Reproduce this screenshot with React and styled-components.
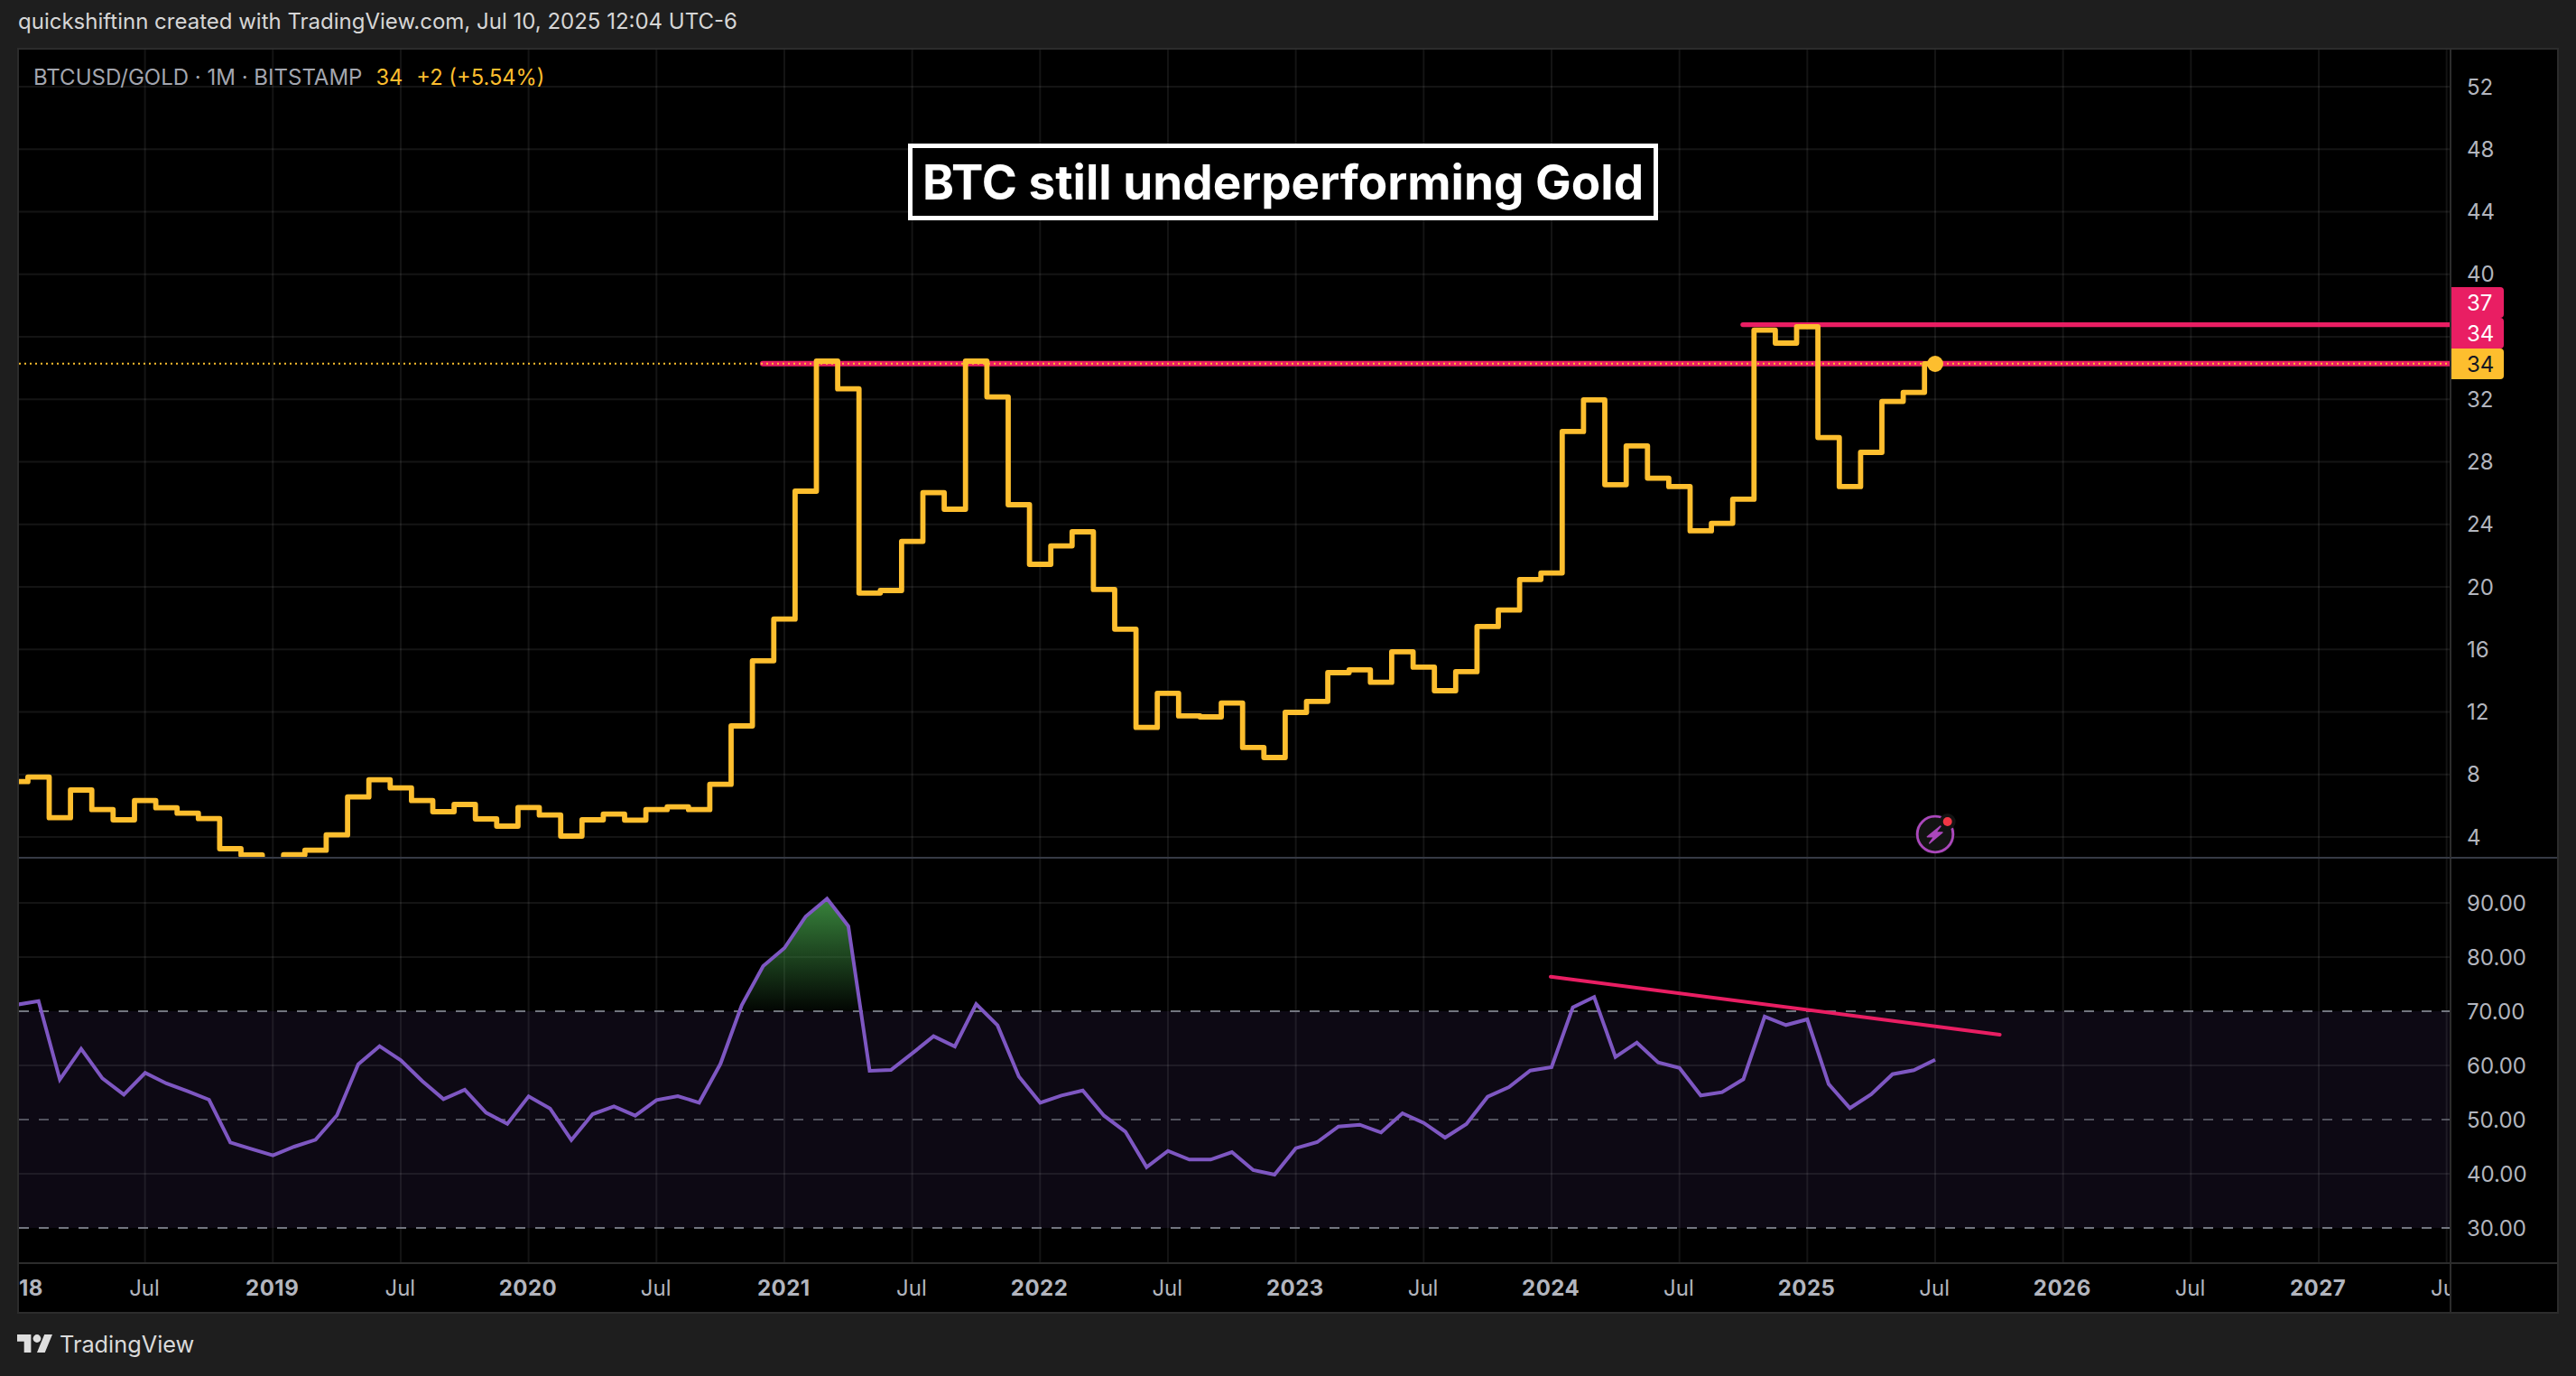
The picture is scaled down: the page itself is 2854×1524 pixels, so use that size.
import React from 'react'
import styled, { createGlobalStyle } from 'styled-components'

const GlobalStyle = createGlobalStyle`
  html, body {
    margin: 0;
    padding: 0;
    background: #1e1e1e;
  }
  * {
    box-sizing: border-box;
  }
`

const Page = styled.div`
  width: 2854px;
  height: 1524px;
  display: flex;
  flex-direction: column;
  overflow: hidden;
  background: #1e1e1e;
  font-family: Inter, "Liberation Sans", sans-serif;
`

const Header = styled.div`
  height: 53px;
  padding: 0 0 6px 20px;
  display: flex;
  align-items: center;
  color: #d6d6d6;
  font-size: 24px;
  white-space: nowrap;
`

const Frame = styled.div`
  margin: 0 19px 0 19px;
  height: 1402px;
  border: 2px solid #2c2c2c;
  background: #000;
  display: grid;
  grid-template-columns: 2693px 119px;
  grid-template-rows: 896px 449px 53px;
`

const Pane = styled.div`
  position: relative;
  overflow: hidden;
  border-bottom: 2px solid ${p => p.$line};
`

const PaneSvg = styled.svg`
  display: block;
`

const Legend = styled.div`
  position: absolute;
  top: 18px;
  left: 16px;
  display: flex;
  gap: 15px;
  font-size: 24px;
  line-height: 26px;
  white-space: nowrap;
  color: #a3a6af;
`

const LegendValue = styled.span`
  color: #fdbe2e;
  font-size: 23.7px;
`

const Title = styled.div`
  position: absolute;
  top: 104px;
  left: 985px;
  height: 85px;
  padding: 0 11px;
  display: flex;
  align-items: center;
  border: 5px solid #fff;
  background: #000;
  color: #fff;
  font-size: 53px;
  font-weight: 700;
  white-space: nowrap;
`

const PriceAxis = styled.div`
  position: relative;
  overflow: hidden;
  display: flex;
  flex-direction: column;
  padding-top: ${p => p.$top}px;
  border-left: 2px solid #2c2c2c;
  border-bottom: 2px solid ${p => p.$line};
`

const PriceLabel = styled.div`
  flex: 0 0 ${p => p.$step}px;
  display: flex;
  align-items: center;
  padding-left: 17px;
  color: #b2b5be;
  font-size: 24px;
`

const TagStack = styled.div`
  position: absolute;
  top: 263px;
  left: 0;
  display: flex;
  flex-direction: column;
`

const Tag = styled.div`
  width: 58px;
  height: 34px;
  padding-left: 17px;
  display: flex;
  align-items: center;
  border-radius: 0 4px 4px 0;
  background: ${p => p.$bg};
  color: ${p => p.$fg};
  font-size: 24px;
`

const TimeAxis = styled.div`
  overflow: hidden;
  display: flex;
  align-items: center;
`

const TimeRow = styled.div`
  margin-left: -73.5px;
  display: flex;
`

const TimeLabel = styled.div`
  flex: 0 0 141.67px;
  text-align: center;
  color: #b2b5be;
  font-size: 24px;
  font-weight: ${p => (p.$year ? 700 : 400)};
  letter-spacing: ${p => (p.$year ? '0.5px' : '0')};
`

const AxisCorner = styled.div`
  border-left: 2px solid #2c2c2c;
`

const Footer = styled.div`
  flex: 1;
  padding: 0 0 3px 19px;
  display: flex;
  align-items: center;
  gap: 8px;
  color: #dadada;
  font-size: 25.3px;
`

// x of the last bar (Jul 2025), one bar is 23.61px, half a year is 141.67px
const LAST_X = 2144
const BAR = 23.61
const HALF_YEAR = 141.67

const gridX = Array.from({ length: 19 }, (_, i) => LAST_X - HALF_YEAR * (14 - i))
const mainGridY = Array.from({ length: 13 }, (_, i) => 96 + 69.25 * i)
const rsiGridY = [1000, 1060, 1180, 1300]

const priceLevels = [
  865.7, 860.7, 905.7, 875, 896.7, 908, 886.7, 894.7, 900.7, 906.7, 940, 947, 962, 946.7, 941.7, 924.7,
  882.7, 863.7, 872.7, 886.7, 899, 891, 907, 915, 894.3, 902.7, 926, 908, 901.7, 908.3, 896.7, 893.7, 896.7, 868.7,
  804, 731.8, 685.7, 544, 400, 430.7, 656.8, 654, 599.6, 545.7, 564, 400, 439.6, 559, 625, 604.6, 589, 652.9,
  696.8, 805.7, 767.9, 792.9, 794, 778.6, 827.9, 839, 789, 776.8, 745, 741.8, 755.7, 721.8, 738.9, 765,
  743.9, 693.9, 675.7, 641.8, 634.6, 477.9, 442.9, 536.8, 493.9, 529.6, 538.9, 587.9, 579.6, 552.9,
  365.7, 380, 361.8, 484.6, 538.9, 501, 444.6, 434.6, 402.9,
]

// RSI values as y on the page, oldest first, last one sits on LAST_X
const rsiLevels = [
  1112.7, 1108.7, 1195.7, 1161.7, 1194.3, 1212.3, 1188.3, 1200, 1208.7, 1218, 1265.3, 1272.7, 1279.7, 1270, 1262.3,
  1235.3, 1178.7, 1158.7, 1174.3, 1197.3, 1217.3, 1207, 1232.3, 1244.7, 1214.3, 1227.7, 1262.7, 1234, 1225.3,
  1235.7, 1218.3, 1214, 1221.3, 1178.3, 1113.3, 1070, 1050, 1015, 995.3, 1025.7, 1186, 1185, 1166.7, 1147.7, 1159,
  1112, 1135.7, 1192.3, 1221.3, 1213.3, 1207.7, 1235.7, 1253.3, 1292.7, 1274.7, 1284.3, 1284.3, 1276, 1296, 1301,
  1271.7, 1265, 1247.7, 1245.7, 1254.3, 1233, 1243.7, 1260, 1245, 1214.7, 1204, 1185.7, 1182, 1115.7, 1104.3,
  1170.7, 1154.7, 1176.7, 1182.7, 1213.3, 1209.7, 1195.3, 1126, 1135.3, 1129, 1200.7, 1227.3, 1212, 1189.7, 1185.3,
  1173.7,
]

const stepPath = () => {
  let d = `M19 ${priceLevels[0]}`
  priceLevels.forEach((y, i) => {
    if (i > 0) d += ` V${y}`
    const k = priceLevels.length - 2 - i
    d += ` H${k < 0 ? LAST_X : (LAST_X - BAR / 2 - BAR * k).toFixed(1)}`
  })
  return d
}

const rsiPoints = rsiLevels.map((y, i) => [LAST_X - BAR * (rsiLevels.length - 1 - i), y])
const rsiLine = rsiPoints.map(p => `${p[0].toFixed(1)},${p[1]}`).join(' ')
const rsiPeak = rsiPoints.slice(33, 41).map(p => `${p[0].toFixed(1)},${p[1]}`).join(' ')

const GridLines = ({ xs, ys, top, bottom }) => (
  <g stroke="#fff" strokeOpacity="0.08" strokeWidth="2">
    {xs.map(x => <line key={x} x1={x} x2={x} y1={top} y2={bottom} />)}
    {ys.map(y => <line key={y} x1="21" x2="2714" y1={y} y2={y} />)}
  </g>
)

const BoltMarker = () => (
  <g>
    <circle cx="2144" cy="924" r="22" fill="#131313" />
    <circle cx="2144" cy="924" r="19.8" fill="#131313" stroke="#ab47bc" strokeWidth="2.8" />
    <path
      d="M2150.7 914.3L2135.3 926.7H2142.7L2137.7 934L2152 922H2144.7Z"
      fill="#ab47bc"
      stroke="#ab47bc"
      strokeWidth="1.4"
      strokeLinejoin="round"
    />
    <circle cx="2157.7" cy="910" r="9" fill="#131313" />
    <circle cx="2157.7" cy="910" r="5" fill="#f23645" />
  </g>
)

const MainChart = () => (
  <PaneSvg width="2693" height="894" viewBox="21 55 2693 894">
    <GridLines xs={gridX} ys={mainGridY} top={55} bottom={949} />
    <BoltMarker />
    <line x1="1931" x2="2714" y1="359.6" y2="359.6" stroke="#e91e63" strokeWidth="5.4" strokeLinecap="round" />
    <line x1="845" x2="2714" y1="402.7" y2="402.7" stroke="#e91e63" strokeWidth="6" strokeLinecap="round" />
    <line x1="21" x2="2714" y1="402.7" y2="402.7" stroke="#fdbe2e" strokeWidth="2" strokeDasharray="2 4" />
    <path d={stepPath()} fill="none" stroke="#fdbe2e" strokeWidth="5.8" strokeLinejoin="round" strokeLinecap="round" />
    <circle cx={LAST_X} cy="403" r="9" fill="#fdbe2e" />
  </PaneSvg>
)

const RsiChart = () => (
  <PaneSvg width="2693" height="447" viewBox="21 951 2693 447">
    <defs>
      <linearGradient id="rsiPeakFill" gradientUnits="userSpaceOnUse" x1="0" x2="0" y1="995" y2="1120">
        <stop offset="0" stopColor="#38843c" />
        <stop offset="1" stopColor="#38843c" stopOpacity="0.04" />
      </linearGradient>
      <clipPath id="aboveBand">
        <rect x="21" y="951" width="2693" height="169" />
      </clipPath>
    </defs>
    <rect x="21" y="1120" width="2693" height="240" fill="#7e57c2" fillOpacity="0.1" />
    <GridLines xs={gridX} ys={rsiGridY} top={951} bottom={1398} />
    <g stroke="#787b86" strokeWidth="2" strokeDasharray="11 11">
      <line x1="21" x2="2714" y1="1120" y2="1120" strokeOpacity="0.95" />
      <line x1="21" x2="2714" y1="1240" y2="1240" strokeOpacity="0.65" />
      <line x1="21" x2="2714" y1="1360" y2="1360" strokeOpacity="0.95" />
    </g>
    <polygon points={rsiPeak} fill="url(#rsiPeakFill)" clipPath="url(#aboveBand)" />
    <polyline points={rsiLine} fill="none" stroke="#7e57c2" strokeWidth="4" />
    <line x1="1718" y1="1081.7" x2="2215.6" y2="1146" stroke="#e91e63" strokeWidth="4" strokeLinecap="round" />
  </PaneSvg>
)

const TradingViewLogo = () => (
  <svg width="39" height="20" viewBox="0 4 35.5 18" fill="#dedede">
    <path d="M14 22H7V11H0V4h14v18zM28 22h-8l7.5-18h8L28 22z" />
    <circle cx="20" cy="8" r="4" />
  </svg>
)

const prices = ['52', '48', '44', '40', '', '32', '28', '24', '20', '16', '12', '8', '4']
const rsiScale = ['90.00', '80.00', '70.00', '60.00', '50.00', '40.00', '30.00']
const timeLabels = Array.from({ length: 20 }, (_, i) => (i % 2 === 0 ? String(2018 + i / 2) : 'Jul'))

const App = () => (
  <Page>
    <GlobalStyle />
    <Header>quickshiftinn created with TradingView.com, Jul 10, 2025 12:04 UTC-6</Header>
    <Frame>
      <Pane $line="#363a45">
        <MainChart />
        <Legend>
          <span>BTCUSD/GOLD · 1M · BITSTAMP</span>
          <LegendValue>34</LegendValue>
          <LegendValue>+2 (+5.54%)</LegendValue>
        </Legend>
        <Title>BTC still underperforming Gold</Title>
      </Pane>
      <PriceAxis $top={6.4} $line="#363a45">
        {prices.map((p, i) => <PriceLabel key={i} $step={69.25}>{p}</PriceLabel>)}
        <TagStack>
          <Tag $bg="#e91e63" $fg="#fff">37</Tag>
          <Tag $bg="#e91e63" $fg="#fff">34</Tag>
          <Tag $bg="#fdbe2e" $fg="#131722">34</Tag>
        </TagStack>
      </PriceAxis>
      <Pane $line="#2c2c2c">
        <RsiChart />
      </Pane>
      <PriceAxis $top={19} $line="#2c2c2c">
        {rsiScale.map(p => <PriceLabel key={p} $step={60}>{p}</PriceLabel>)}
      </PriceAxis>
      <TimeAxis>
        <TimeRow>
          {timeLabels.map((t, i) => <TimeLabel key={i} $year={t !== 'Jul'}>{t}</TimeLabel>)}
        </TimeRow>
      </TimeAxis>
      <AxisCorner />
    </Frame>
    <Footer>
      <TradingViewLogo />
      TradingView
    </Footer>
  </Page>
)

export default App
